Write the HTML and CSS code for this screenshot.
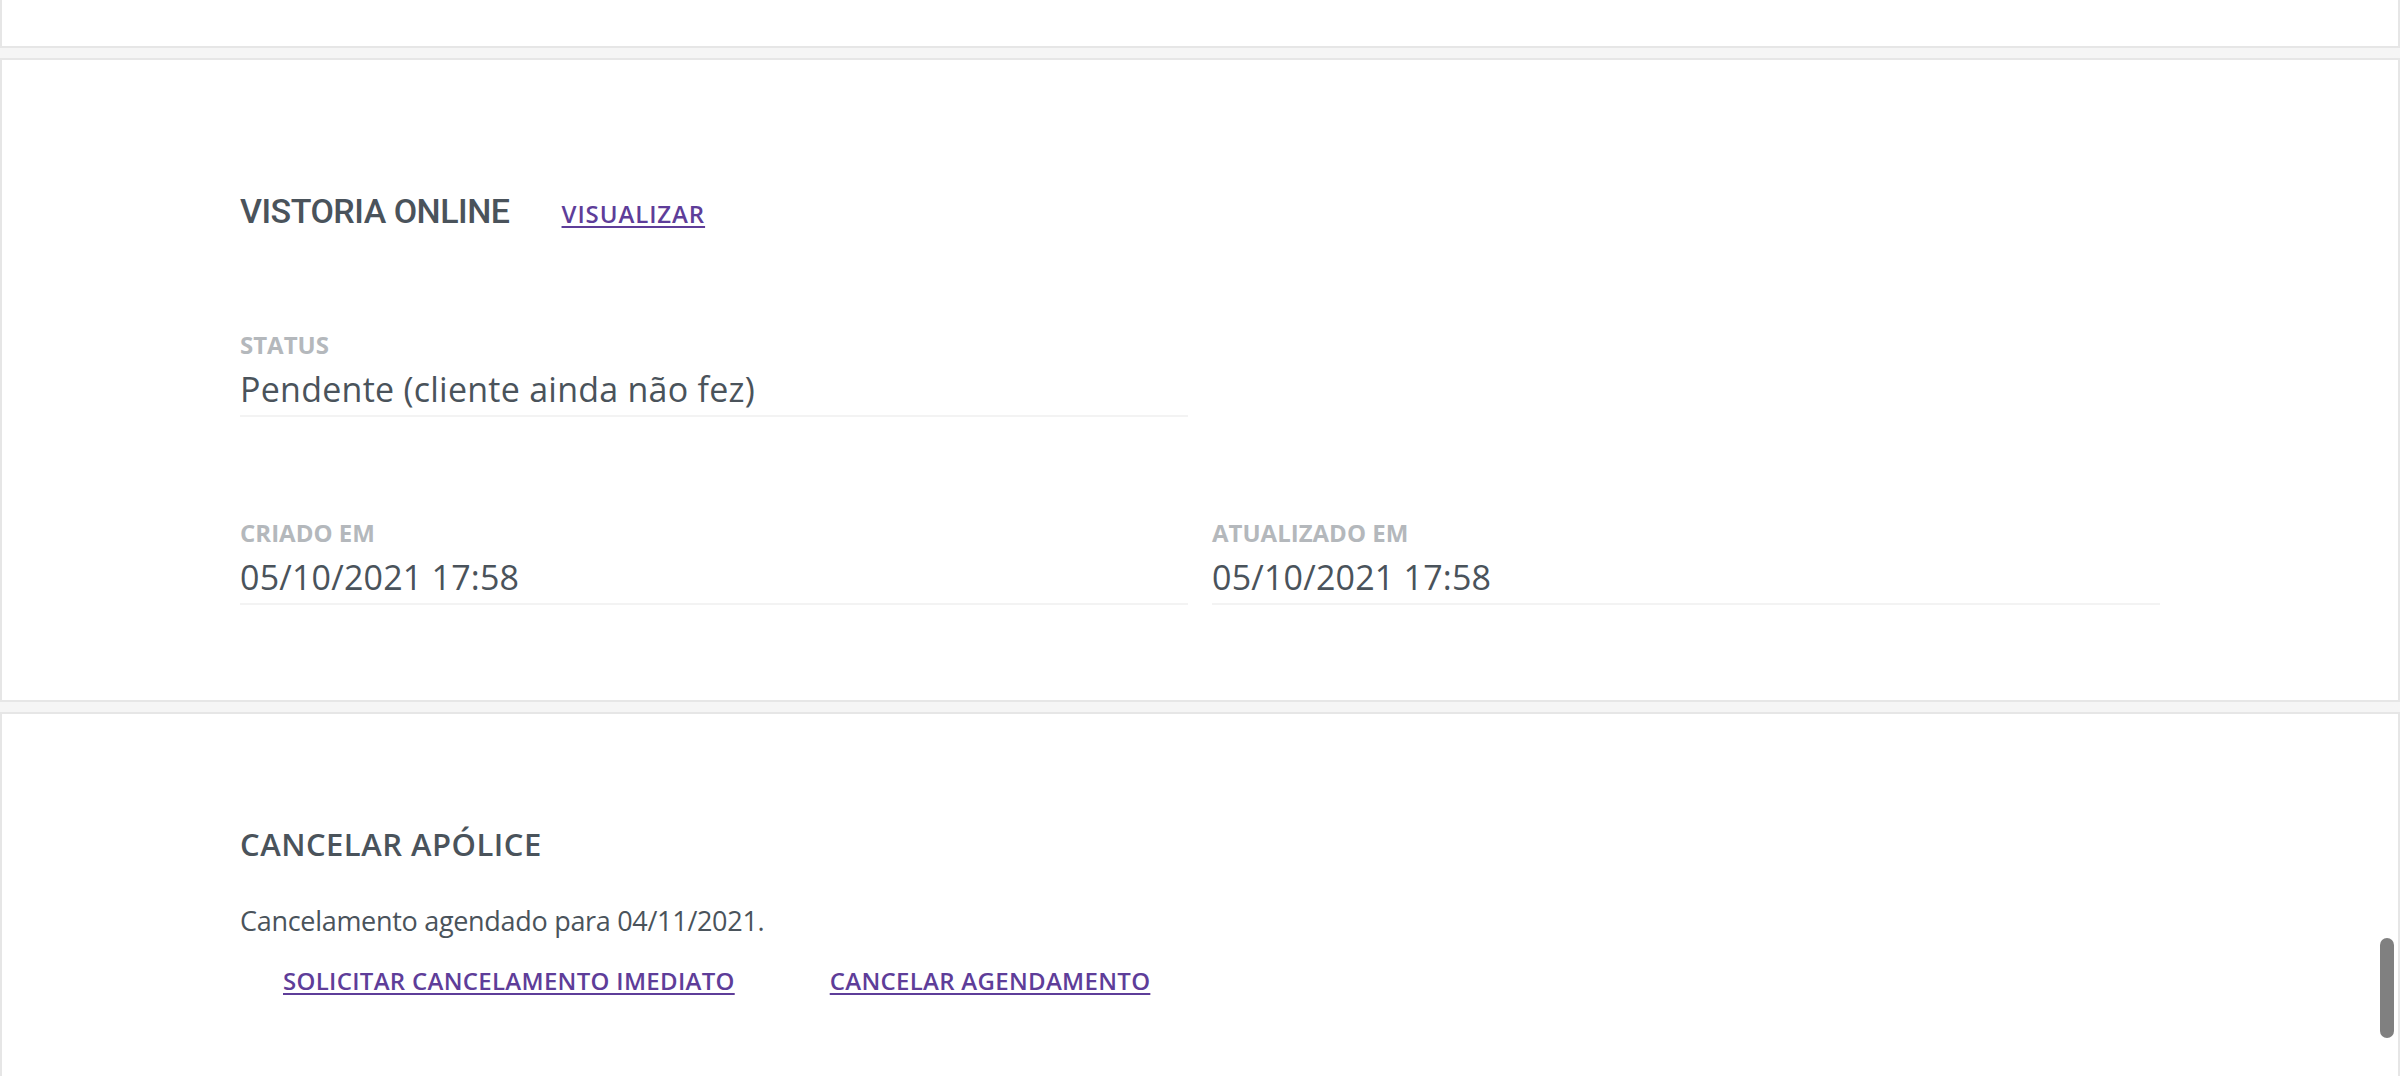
FILE: index.html
```html
<!DOCTYPE html>
<html lang="pt-BR">
<head>
<meta charset="utf-8">
<title>Apólice</title>
<link rel="stylesheet" href="styles.css">
</head>
<body>
<div class="page">
  <section class="card card-prev"></section>

  <section class="card card-vistoria">
    <div class="section-head">
      <h2 class="section-title title-vistoria">VISTORIA ONLINE</h2>
      <a class="link head-link" href="#">VISUALIZAR</a>
    </div>
    <div class="fields">
      <div class="field">
        <div class="field-label">STATUS</div>
        <div class="field-value">Pendente (cliente ainda não fez)</div>
      </div>
      <div class="field-spacer"></div>
      <div class="field">
        <div class="field-label">CRIADO EM</div>
        <div class="field-value value-date">05/10/2021 17:58</div>
      </div>
      <div class="field">
        <div class="field-label">ATUALIZADO EM</div>
        <div class="field-value value-date">05/10/2021 17:58</div>
      </div>
    </div>
  </section>

  <section class="card card-cancel">
    <h2 class="section-title title-cancel">CANCELAR APÓLICE</h2>
    <p class="cancel-text">Cancelamento agendado para 04/11/2021.</p>
    <div class="actions">
      <a class="link action-link" href="#">SOLICITAR CANCELAMENTO IMEDIATO</a>
      <a class="link action-link" href="#">CANCELAR AGENDAMENTO</a>
    </div>
  </section>
</div>
<div class="scroll-thumb"></div>
</body>
</html>
```

FILE: styles.css
```css
html, body {
  margin: 0;
  padding: 0;
  overflow: hidden;
  height: 100%;
}

body {
  background: #f5f5f5;
  font-family: "Open Sans", "Noto Sans", sans-serif;
  color: #4a535b;
}

.page {
  display: flex;
  flex-direction: column;
  gap: 10px;
}

.card {
  background: #ffffff;
  border: 2px solid #e6e6e6;
}

.card-prev {
  border-top: 0;
  height: 46px;
}

.card-vistoria {
  padding: 131px 238px 95px 238px;
}

.section-head {
  display: flex;
  align-items: baseline;
}

.section-title {
  margin: 0;
  color: #4a535b;
}

.title-vistoria {
  font-family: Roboto, "Open Sans", sans-serif;
  font-weight: 500;
  font-size: 34px;
  line-height: 40px;
  letter-spacing: -0.5px;
}

.link {
  color: #5e3d99;
  font-family: "Open Sans", sans-serif;
  font-weight: 600;
  font-size: 24px;
  text-decoration: underline;
  text-decoration-thickness: 2px;
  text-underline-offset: 3px;
}

.head-link {
  margin-left: 52px;
  line-height: 40px;
  letter-spacing: 0.9px;
}

.fields {
  display: grid;
  grid-template-columns: 948px 948px;
  column-gap: 24px;
  row-gap: 100px;
  margin-top: 95px;
}

.field-label {
  font-weight: 700;
  font-size: 24px;
  line-height: 32px;
  color: #b4b8bc;
}

.field-value {
  margin-top: 6px;
  font-size: 34px;
  line-height: 44px;
  letter-spacing: 0.25px;
  padding-bottom: 4px;
  border-bottom: 2px solid #f3f3f3;
  color: #4a535b;
}

.value-date {
  letter-spacing: 0.2px;
}

.card-cancel {
  padding: 110px 238px 200px 238px;
}

.title-cancel {
  font-family: "Open Sans", sans-serif;
  font-weight: 600;
  font-size: 31px;
  line-height: 40px;
  letter-spacing: 0.5px;
}

.cancel-text {
  margin: 37px 0 0 0;
  font-size: 27px;
  line-height: 40px;
  letter-spacing: -0.3px;
}

.actions {
  display: flex;
  gap: 95px;
  margin-left: 43px;
  margin-top: 24px;
  line-height: 32px;
}

.action-link {
  letter-spacing: 0.3px;
}

.scroll-thumb {
  position: fixed;
  right: 6px;
  top: 938px;
  width: 14px;
  height: 100px;
  border-radius: 7px;
  background: #808080;
}
```
